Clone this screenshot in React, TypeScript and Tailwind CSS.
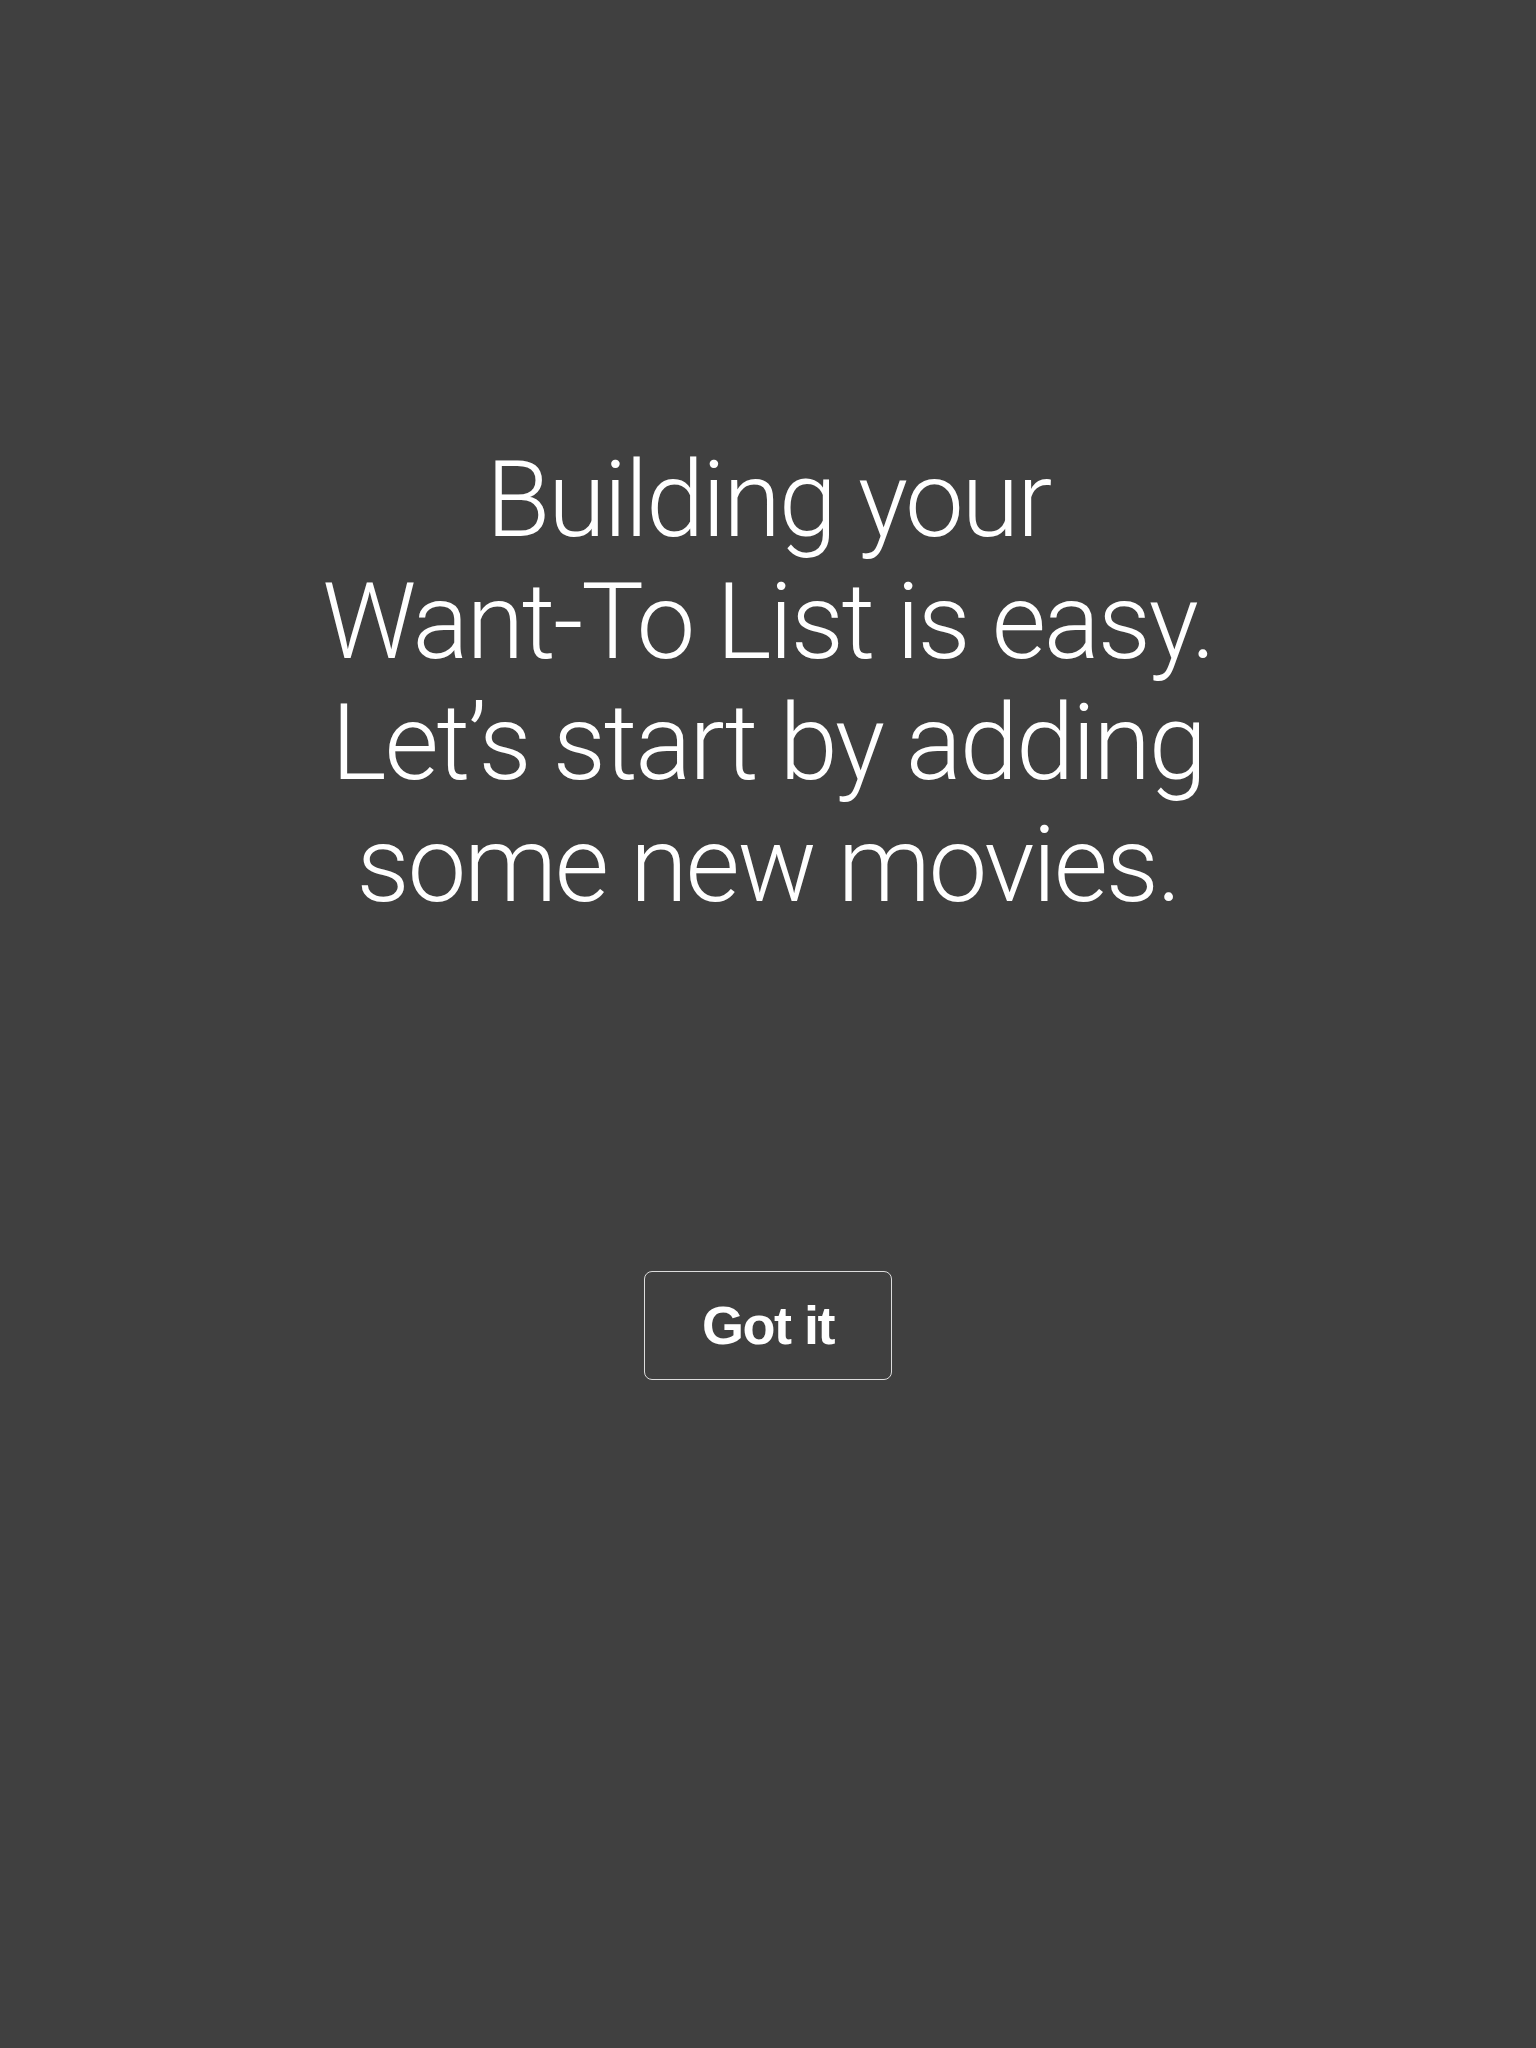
import React from "react";

const App = () => {
  return (
    <div className="min-h-[2048px] w-full bg-[#404040] flex flex-col items-center pt-[440px]">
      <h1 className="font-['Roboto','Liberation_Sans',sans-serif] text-white text-center text-[105px] leading-[121.5px] font-light tracking-[-2.3px]">
        Building your
        <br />
        Want-To List is easy.
        <br />
        Let’s start by adding
        <br />
        some new movies.
      </h1>
      <button className="font-['Liberation_Sans',Arial,sans-serif] mt-[345px] w-[248px] h-[109px] flex items-center justify-center border border-[#dcdcdc] rounded-lg text-white text-[54px] font-bold tracking-[-1.5px]">
        Got it
      </button>
    </div>
  );
};

export default App;
